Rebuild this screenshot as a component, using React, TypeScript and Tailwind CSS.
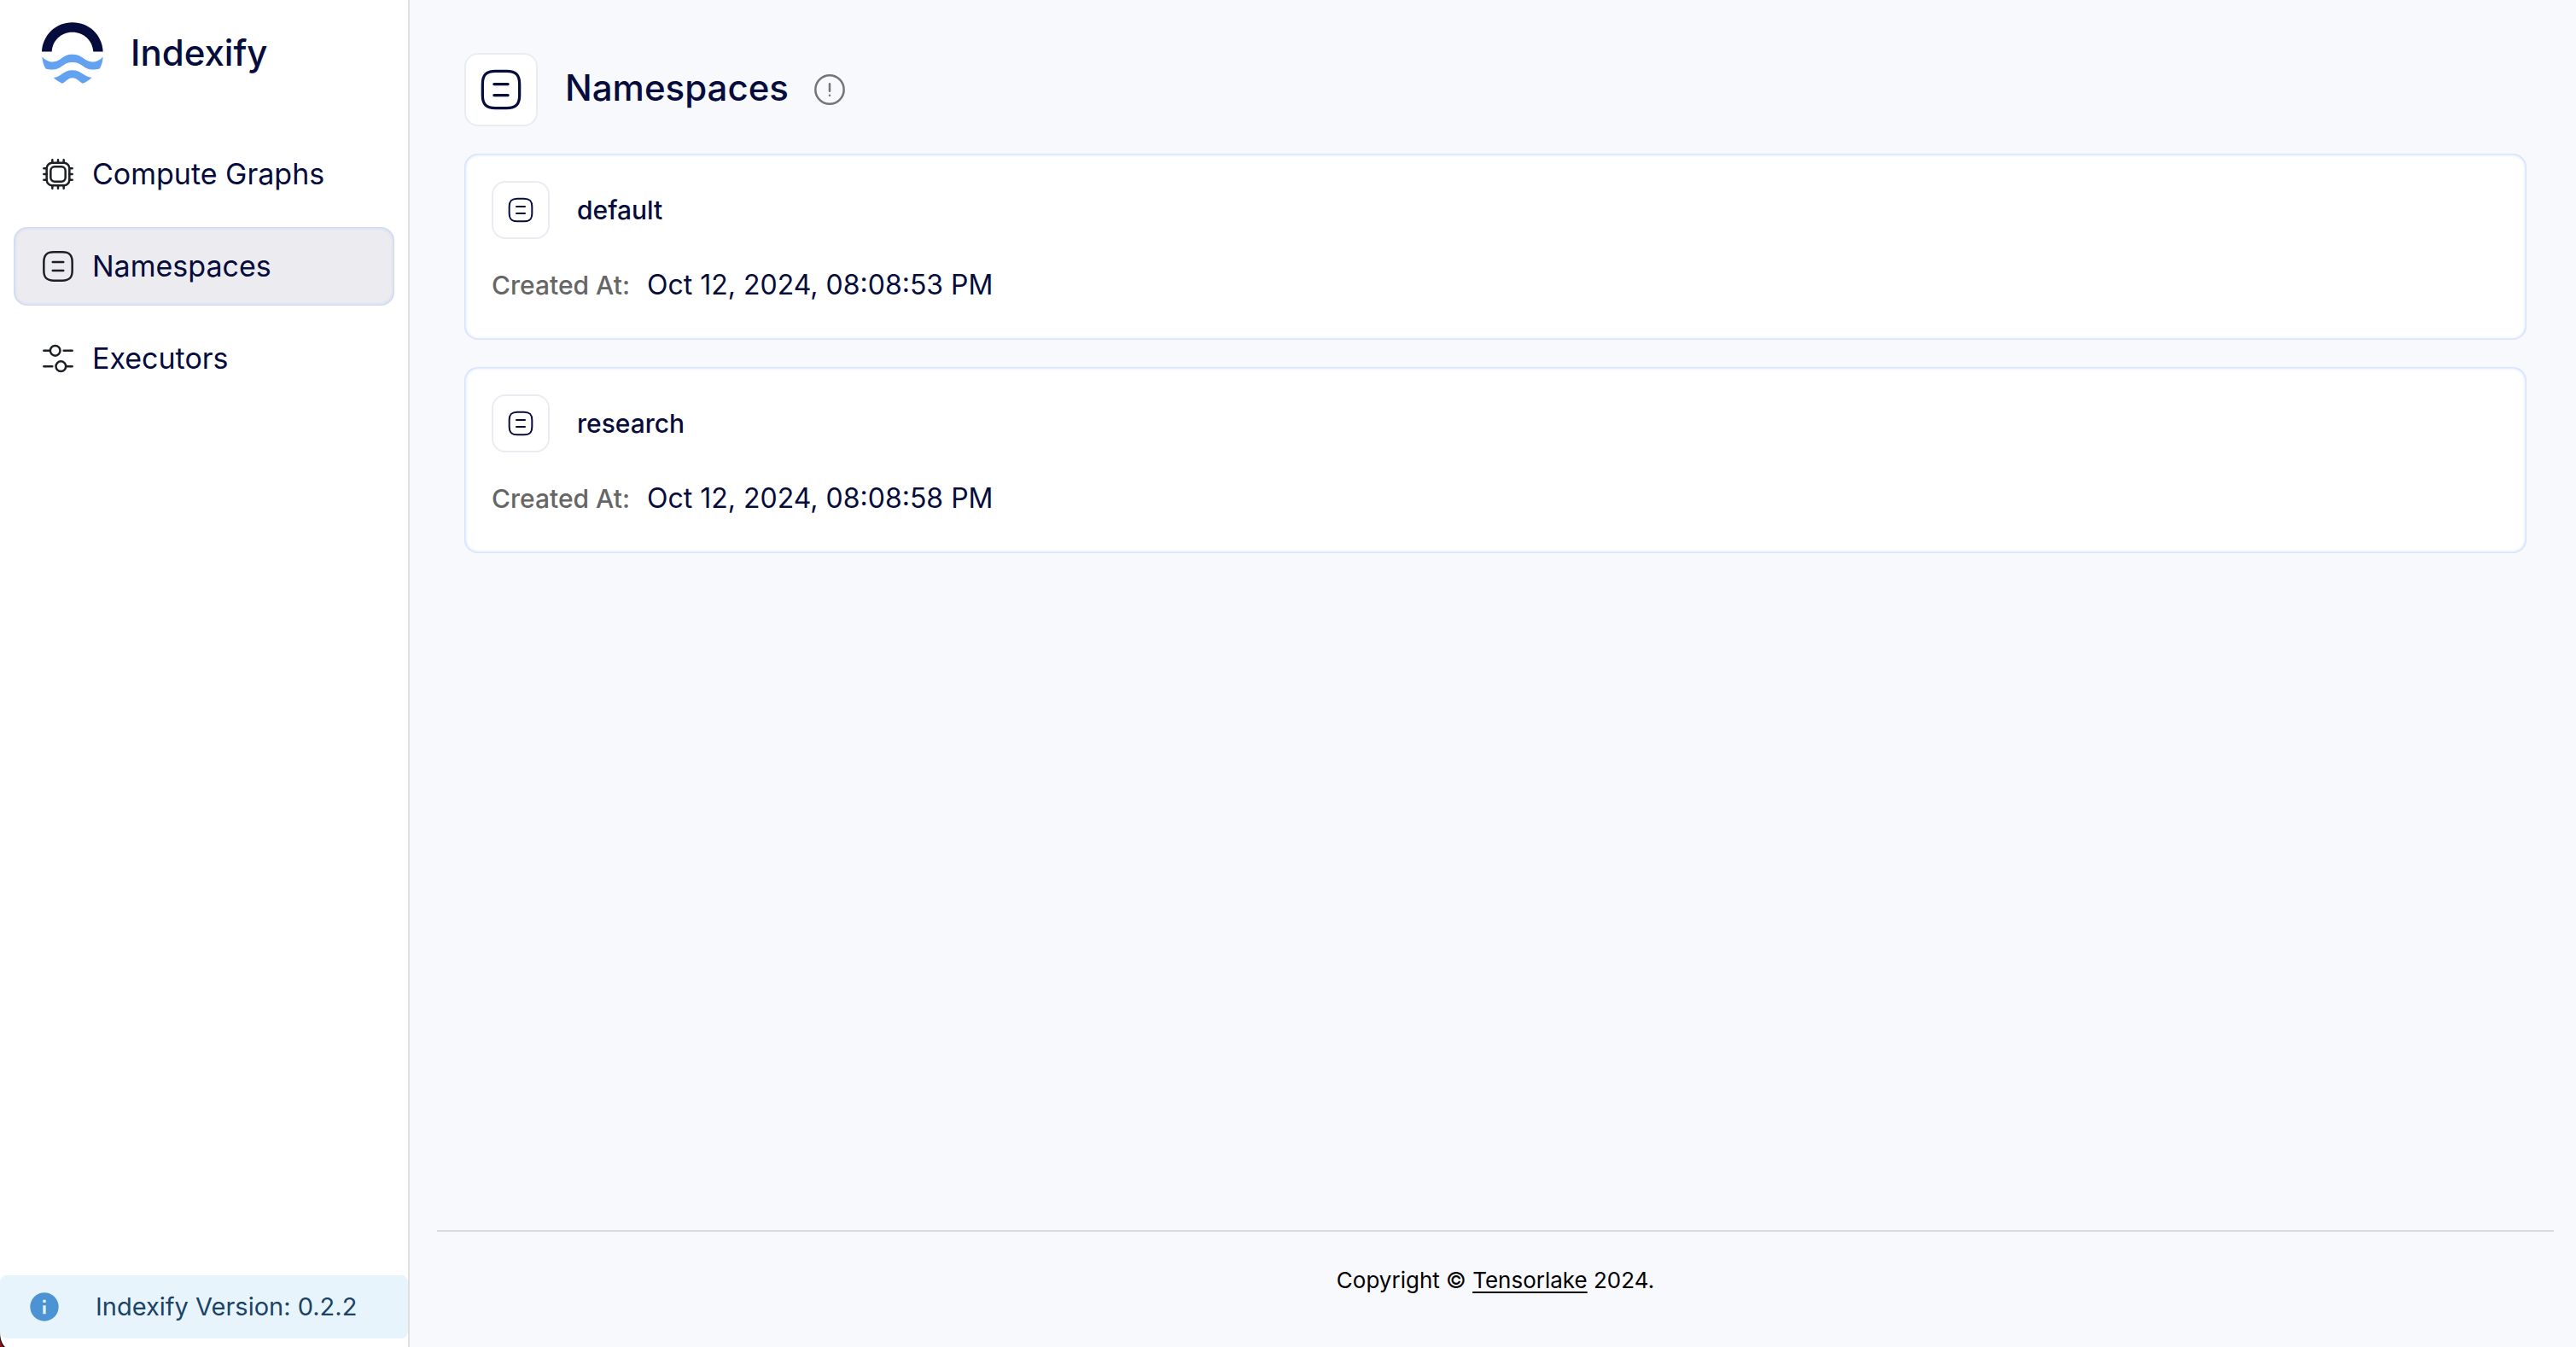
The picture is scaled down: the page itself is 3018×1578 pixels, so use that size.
import React from 'react';

type IconProps = { className?: string };

function Logo({ className }: IconProps) {
  return (
    <svg viewBox="147 78 215 213" className={className} aria-hidden="true">
      <path
        fill="#060c3b"
        d="M147 180C150 122 196 78 254 78S359 122 361 180H327C325 142 294 112 254 112S184 142 182 180Z"
      />
      <path
        fill="#62a2f0"
        d="M148 198C160 210 172 216 184 216C214 216 218 190 254 190S296 216 324 216C338 216 350 210 361 198C360 214 356 228 350 239C342 242 333 243 324 243C294 243 288 217 254 217S216 243 184 243C176 243 166 242 160 239C153 227 149 214 148 198Z"
      />
      <path
        fill="#62a2f0"
        d="M188 271C212 271 222 245 254 245S297 271 322 270C313 279 302 286 290 291C278 287 272 272 254 272S232 287 218 291C207 286 197 279 188 271Z"
      />
    </svg>
  );
}

function LineIcon({ className, children }: IconProps & { children: React.ReactNode }) {
  return (
    <svg
      viewBox="0 0 24 24"
      fill="none"
      stroke="currentColor"
      strokeWidth="1.5"
      strokeLinecap="round"
      strokeLinejoin="round"
      className={className}
      aria-hidden="true"
    >
      {children}
    </svg>
  );
}

function ChipIcon({ className }: IconProps) {
  return (
    <LineIcon className={className}>
      <path d="M8 4h8a4 4 0 0 1 4 4v8a4 4 0 0 1-4 4H8a4 4 0 0 1-4-4V8a4 4 0 0 1 4-4z" />
      <path d="M9.6 6.8h4.8a2.8 2.8 0 0 1 2.8 2.8v4.8a2.8 2.8 0 0 1-2.8 2.8H9.6a2.8 2.8 0 0 1-2.8-2.8V9.6a2.8 2.8 0 0 1 2.8-2.8z" />
      <path d="M8 4V2M12 4V2M16 4V2M20 8h2M20 12h2M20 16h2M16 20v2M12 20v2M8 20v2M2 8h2M2 12h2M2 16h2" />
    </LineIcon>
  );
}

function NamespaceIcon({ className }: IconProps) {
  return (
    <LineIcon className={className}>
      <path d="M9 22h6c5 0 7-2 7-7V9c0-5-2-7-7-7H9C4 2 2 4 2 9v6c0 5 2 7 7 7z" />
      <path d="M15.75 9h-7.5M15.75 15h-7.5" />
    </LineIcon>
  );
}

function SlidersIcon({ className }: IconProps) {
  return (
    <LineIcon className={className}>
      <path d="M22 6.5h-6M6 6.5H2M22 17.5h-4M8 17.5H2" />
      <circle cx="10" cy="6.5" r="3.5" />
      <circle cx="14" cy="17.5" r="3.5" />
    </LineIcon>
  );
}

function InfoOutlineIcon({ className }: IconProps) {
  return (
    <LineIcon className={className}>
      <circle cx="12" cy="12" r="10" />
      <path d="M12 8v5M12 16h.01" />
    </LineIcon>
  );
}

function InfoFilledIcon({ className }: IconProps) {
  return (
    <svg viewBox="0 0 24 24" fill="currentColor" className={className} aria-hidden="true">
      <path d="M12 2C6.48 2 2 6.48 2 12s4.48 10 10 10 10-4.48 10-10S17.52 2 12 2zm1 15h-2v-6h2v6zm0-8h-2V7h2v2z" />
    </svg>
  );
}

const navItems = [
  { label: 'Compute Graphs', Icon: ChipIcon, active: false },
  { label: 'Namespaces', Icon: NamespaceIcon, active: true },
  { label: 'Executors', Icon: SlidersIcon, active: false },
];

const namespaces = [
  { name: 'default', createdAt: 'Oct 12, 2024, 08:08:53 PM' },
  { name: 'research', createdAt: 'Oct 12, 2024, 08:08:58 PM' },
];

function Sidebar() {
  return (
    <aside className="relative flex w-[480px] shrink-0 flex-col border-r-2 border-[#e0e0e0] bg-white">
      <div className="flex h-[124px] items-center gap-8 pl-[49px]">
        <Logo className="h-[72px] w-[72px]" />
        <span className="text-[42px] leading-[60px] font-medium">Indexify</span>
      </div>
      <nav className="mt-[34px] flex flex-col gap-4 px-4">
        {navItems.map(({ label, Icon, active }) => (
          <a
            key={label}
            href="#"
            aria-current={active ? 'page' : undefined}
            className={
              active
                ? 'flex h-[92px] items-center gap-5 rounded-2xl bg-[#ebebf0] px-8 shadow-[inset_0_0_4px_#a8c4ee]'
                : 'flex h-[92px] items-center gap-5 rounded-2xl px-8'
            }
          >
            <Icon className="h-10 w-10 text-[#1c1f24]" />
            <span className="text-[34px] leading-[48px]">{label}</span>
          </a>
        ))}
      </nav>
      <div className="mt-auto mb-[10px] flex h-[74px] items-center gap-10 rounded-lg bg-[#e7f4fc] pl-8 text-[#1a4366]">
        <InfoFilledIcon className="h-10 w-10 text-[#4b93d3]" />
        <span className="text-[29px] leading-10">Indexify Version: 0.2.2</span>
      </div>
      <svg viewBox="0 0 6 18" className="absolute bottom-0 left-0 h-[18px] w-[6px]" aria-hidden="true">
        <path fill="#0d0506" d="M0 0C0 8 2 14 6 18H0Z" />
        <path fill="#8c1418" d="M0 5C0 10 1 14 4 18H0Z" />
      </svg>
    </aside>
  );
}

function NamespaceCard({ name, createdAt }: { name: string; createdAt: string }) {
  return (
    <li className="flex h-[218px] flex-col gap-[30px] rounded-2xl bg-white p-8 shadow-[inset_0_0_4px_#9cbcfb]">
      <div className="flex items-center gap-8">
        <div className="flex h-[68px] w-[68px] items-center justify-center rounded-2xl border-2 border-[#e9edf2]">
          <NamespaceIcon className="h-8 w-8" />
        </div>
        <h2 className="text-[30px] leading-10 font-medium">{name}</h2>
      </div>
      <p className="flex items-baseline gap-5">
        <span className="text-[30px] leading-[48px] font-medium text-[#666666]">Created At:</span>
        <span className="text-[32px] leading-[48px]">{createdAt}</span>
      </p>
    </li>
  );
}

export default function App() {
  return (
    <div className="flex min-h-screen bg-[#f7f9fd] font-['Inter',sans-serif] text-[#060c3b]">
      <Sidebar />
      <div className="flex min-w-0 flex-1 flex-col">
        <main className="flex-1 pt-[62px] pr-[58px] pl-16">
          <div className="flex items-center">
            <div className="flex h-[86px] w-[86px] items-center justify-center rounded-2xl border-2 border-[#e9edf2] bg-white">
              <NamespaceIcon className="h-[52px] w-[52px]" />
            </div>
            <h1 className="ml-8 pb-1 text-[42px] leading-[60px] font-medium">Namespaces</h1>
            <button type="button" aria-label="About namespaces" className="ml-7 text-[#757575]">
              <InfoOutlineIcon className="h-10 w-10" />
            </button>
          </div>
          <ul className="mt-8 flex flex-col gap-8">
            {namespaces.map((ns) => (
              <NamespaceCard key={ns.name} name={ns.name} createdAt={ns.createdAt} />
            ))}
          </ul>
        </main>
        <footer className="mr-[26px] ml-8 h-[137px] border-t-2 border-[#d9dbe0] pt-10 text-center text-[26px] leading-[34px] text-black">
          Copyright ©{' '}
          <a href="#" className="underline decoration-2 underline-offset-4">
            Tensorlake
          </a>{' '}
          2024.
        </footer>
      </div>
    </div>
  );
}
